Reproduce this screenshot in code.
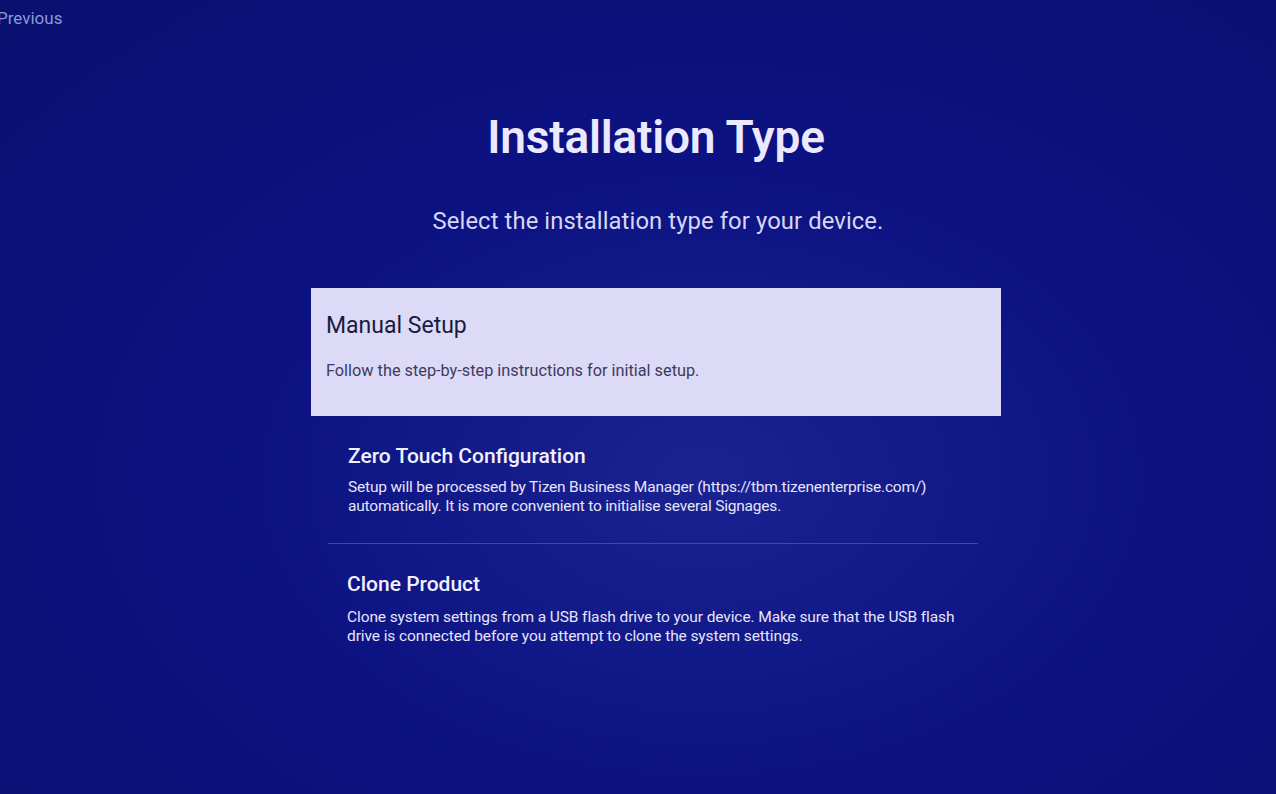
import React from 'react';

const font = { fontFamily: 'Roboto, "Noto Sans", sans-serif' };

const options = [
  {
    title: 'Zero Touch Configuration',
    lines: [
      'Setup will be processed by Tizen Business Manager (https://tbm.tizenenterprise.com/)',
      'automatically. It is more convenient to initialise several Signages.',
    ],
  },
  {
    title: 'Clone Product',
    lines: [
      'Clone system settings from a USB flash drive to your device. Make sure that the USB flash',
      'drive is connected before you attempt to clone the system settings.',
    ],
  },
];

export default function App() {
  return (
    <div
      className="relative h-[794px] w-full overflow-hidden bg-[radial-gradient(ellipse_at_55%_60%,#1a2391_0%,#0c1282_45%,#09106f_100%)]"
      style={font}
    >
      <div className="pt-[7px] -ml-[3px] text-[17px] leading-[22px] text-[#8e97d8]">Previous</div>

      <div className="ml-[311px] w-[690px]">
        <h1 className="mt-[80px] text-center text-[46px] leading-[56px] font-semibold text-[#ece8ff] tracking-[-0.2px]">
          Installation Type
        </h1>
        <p className="mt-[41px] pl-[4px] text-center text-[23.8px] leading-[30px] text-[#d8d6f4] tracking-[0.1px]">
          Select the installation type for your device.
        </p>

        <div className="mt-[52px] h-[128px] bg-[#dcdaf6] px-[15px] pt-[24px]">
          <div className="text-[23px] leading-[28px] text-[#1b1a40]">Manual Setup</div>
          <div className="mt-[21px] text-[16.3px] leading-[20px] text-[#3c3b5e]">
            Follow the step-by-step instructions for initial setup.
          </div>
        </div>

        <div className="mt-[26px] px-[37px]">
          <div className="text-[21px] leading-[28px] font-medium text-[#f2f0ff]">{options[0].title}</div>
          <div className="mt-[8px] whitespace-nowrap text-[15.5px] leading-[19px] tracking-[-0.2px] text-[#e6e4fa]">
            {options[0].lines.map((l) => (
              <div key={l}>{l}</div>
            ))}
          </div>
        </div>

        <div className="mt-[27px] ml-[17px] mr-[23px] h-px bg-[#3a4aa8]" />

        <div className="mt-[26px] px-[36px]">
          <div className="text-[21px] leading-[28px] font-medium text-[#f2f0ff]">{options[1].title}</div>
          <div className="mt-[10px] whitespace-nowrap text-[15.5px] leading-[19px] tracking-[-0.1px] text-[#e6e4fa]">
            {options[1].lines.map((l) => (
              <div key={l}>{l}</div>
            ))}
          </div>
        </div>
      </div>
    </div>
  );
}
